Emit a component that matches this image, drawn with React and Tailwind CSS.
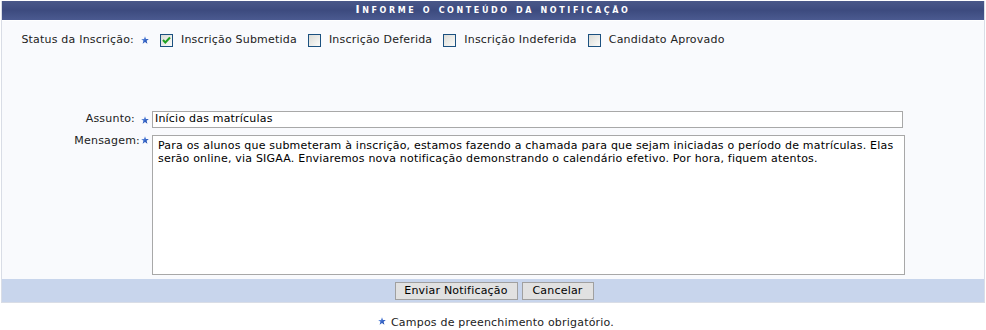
import React from "react";

function Star({ className = "" }) {
  return (
    <svg width="8" height="8" viewBox="0 0 10 10" className={className}>
      <defs>
        <linearGradient id="sg" x1="0" y1="0" x2="1" y2="1">
          <stop offset="0" stopColor="#8fb2ef" />
          <stop offset="0.6" stopColor="#2f5fc4" />
          <stop offset="1" stopColor="#1c3f94" />
        </linearGradient>
      </defs>
      <polygon
        points="5,0.3 6.3,3.6 9.8,3.7 7,5.9 8,9.6 5,7.5 2,9.6 3,5.9 0.2,3.7 3.7,3.6"
        fill="url(#sg)"
      />
    </svg>
  );
}

function Box({ checked }) {
  return (
    <span className="relative inline-block w-[13px] h-[13px] border border-[#1c5180] bg-gradient-to-br from-[#dcdcd7] to-[#fbfbf9] shrink-0">
      {checked && (
        <svg width="11" height="11" viewBox="0 0 11 11" className="absolute left-0 top-0">
          <path d="M2 5 L4.3 7.5 L9 2.5" stroke="#21a121" strokeWidth="2" fill="none" />
        </svg>
      )}
    </span>
  );
}

function Opt({ checked, label }) {
  return (
    <span className="flex items-center">
      <Box checked={checked} />
      <span className="ml-[8px] mr-[11px]">{label}</span>
    </span>
  );
}

export default function App() {
  return (
    <div className="w-[986px] h-[330px] bg-white text-[11px] tracking-[0.2px] text-[#222] font-['DejaVu_Sans','Liberation_Sans',sans-serif] pt-px">
      <div className="ml-px w-[984px] border border-[#d9dde6] border-t-0 bg-[#f9fafd]">
        <div className="h-[20px] bg-gradient-to-b from-[#4a5889] via-[#3d4b7f] to-[#4b5a90] flex items-center justify-center text-white font-bold [font-variant:small-caps] tracking-[2.6px] text-[11px] border-b border-white">
          Informe o conteúdo da notificação
        </div>
        <div className="h-[20px] mt-[9px] flex items-center">
          <div className="w-[150px] flex items-center justify-end pr-[2px]">
            <span>Status da Inscrição:</span>
            <Star className="ml-[7px] mr-[1px]" />
          </div>
          <div className="flex items-center pl-[8px]">
            <Opt checked label="Inscrição Submetida" />
            <Opt label="Inscrição Deferida" />
            <Opt label="Inscrição Indeferida" />
            <Opt label="Candidato Aprovado" />
          </div>
        </div>
        <div className="h-[61px]" />
        <div className="flex items-center h-[17px]">
          <div className="w-[150px] flex items-center justify-end pr-[2px]">
            <span>Assunto:</span>
            <Star className="ml-[6px] mr-[1px]" />
          </div>
          <div className="w-[751px] h-[17px] border border-[#a8a8a8] bg-white flex items-center pl-[2px] text-black">
            Início das matrículas
          </div>
        </div>
        <div className="flex mt-[7px]">
          <div className="w-[150px] flex items-start justify-end pr-[2px] -mt-[2px]">
            <span>Mensagem:</span>
            <Star className="ml-[1px] mr-[1px] mt-[3px]" />
          </div>
          <div className="w-[753px] h-[140px] border border-[#a8a8a8] bg-white px-[5px] pt-[3px] leading-[13px] text-black">
            Para os alunos que submeteram à inscrição, estamos fazendo a chamada para que sejam iniciadas o período de matrículas. Elas
            <br />
            serão online, via SIGAA. Enviaremos nova notificação demonstrando o calendário efetivo. Por hora, fiquem atentos.
          </div>
        </div>
        <div className="mt-[4px] h-[23px] bg-[#c8d5ec] flex items-center justify-center gap-[4px]">
          <button className="h-[18px] w-[123px] bg-[#e1e1e1] border border-[#a0a0a0] text-black text-[11px] leading-none ml-[2px]">
            Enviar Notificação
          </button>
          <button className="h-[18px] w-[72px] bg-[#e1e1e1] border border-[#a0a0a0] text-black text-[11px] leading-none">
            Cancelar
          </button>
        </div>
      </div>
      <div className="mt-[13px] flex justify-center items-start pl-[6px]">
        <Star className="mr-[5px] mt-[1px]" />
        <span className="leading-[13px]">Campos de preenchimento obrigatório.</span>
      </div>
    </div>
  );
}
